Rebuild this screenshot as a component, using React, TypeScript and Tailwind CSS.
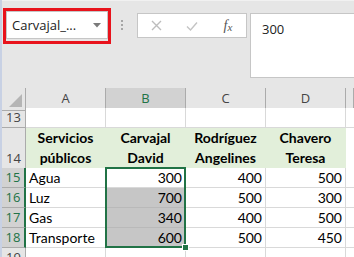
import React from "react";

const UI_FONT = "font-['Open_Sans',_'Noto_Sans',_sans-serif]";
const CELL_FONT = "font-['Lato',_'Liberation_Sans',_sans-serif]";

type Row = {
  num: number;
  cells: string[];
  kind: "blank" | "head" | "data";
  height: string;
};

const ROWS: Row[] = [
  { num: 13, cells: ["", "", "", ""], kind: "blank", height: "h-[20px]" },
  {
    num: 14,
    cells: ["Servicios\npúblicos", "Carvajal\nDavid", "Rodríguez\nAngelines", "Chavero\nTeresa"],
    kind: "head",
    height: "h-[40px]",
  },
  { num: 15, cells: ["Agua", "300", "400", "500"], kind: "data", height: "h-[20px]" },
  { num: 16, cells: ["Luz", "700", "500", "300"], kind: "data", height: "h-[20px]" },
  { num: 17, cells: ["Gas", "340", "400", "500"], kind: "data", height: "h-[20px]" },
  { num: 18, cells: ["Transporte", "600", "500", "450"], kind: "data", height: "h-[20px]" },
  { num: 19, cells: ["", "", "", ""], kind: "blank", height: "h-[20px]" },
];

function NameBox() {
  return (
    <div className="ml-[1px] mt-[7px] h-[36px] w-[108px] border-[3px] border-[#e8131c] pb-[2px]">
      <div className="flex h-full items-center border border-[#c6c6c6] bg-white pl-[5px] pr-[6px]">
        <span className={`${UI_FONT} flex-1 text-[13px] leading-none text-[#222]`}>Carvajal_...</span>
        <svg width="8" height="5" viewBox="0 0 8 5">
          <path d="M0 0 L8 0 L4 4.5 Z" fill="#7a7a7a" />
        </svg>
      </div>
    </div>
  );
}

function FormulaButtons() {
  return (
    <div className="ml-[14px] mt-[12px] flex h-[25px] w-[110px] items-center border border-[#c6c6c6] bg-white">
      <div className="flex w-[36px] justify-center">
        <svg width="11" height="11" viewBox="0 0 11 11">
          <path d="M1 1 L10 10 M10 1 L1 10" stroke="#bdbdbd" strokeWidth="1.4" />
        </svg>
      </div>
      <div className="flex w-[36px] justify-center">
        <svg width="12" height="10" viewBox="0 0 12 10">
          <path d="M1 5.5 L4.5 9 L11 1.5" stroke="#c4c4c4" strokeWidth="1.4" fill="none" />
        </svg>
      </div>
      <div className="flex w-[36px] justify-center">
        <span className="font-['Liberation_Serif',_serif] text-[14px] italic leading-none text-[#555]">
          f<span className="relative top-[1px] text-[11px]">x</span>
        </span>
      </div>
    </div>
  );
}

function Toolbar() {
  return (
    <div className="flex h-[88px] shrink-0 items-start border-t border-[#f1f1f1]">
      <NameBox />
      <div className="ml-[10px] mt-[19px] flex flex-col gap-[2px]">
        <div className="h-[2px] w-[2px] bg-[#a6a6a6]" />
        <div className="h-[2px] w-[2px] bg-[#a6a6a6]" />
        <div className="h-[2px] w-[2px] bg-[#a6a6a6]" />
      </div>
      <FormulaButtons />
      <div
        className={`${UI_FONT} ml-[3px] mt-[12px] h-[65px] flex-1 border border-r-0 border-[#c6c6c6] bg-white pl-[11px] pt-[7px] text-[13px] leading-[16px] text-[#222]`}
      >
        300
      </div>
    </div>
  );
}

function ColumnHeaders() {
  const cols = ["A", "B", "C", "D", ""];
  return (
    <div className="grid h-[20px] shrink-0 grid-cols-[24px_80px_80px_80px_80px_1fr]">
      <div className="relative border-r border-b border-[#ababab] bg-[#e6e6e6]">
        <svg className="absolute right-[3px] bottom-[3px]" width="13" height="13" viewBox="0 0 13 13">
          <path d="M13 0 L13 13 L0 13 Z" fill="#b5b5b5" />
        </svg>
      </div>
      {cols.map((c, i) =>
        c === "B" ? (
          <div
            key={i}
            className={`${UI_FONT} flex items-center justify-center border-r border-b-2 border-r-[#ababab] border-b-[#217346] bg-[#d2d2d2] pt-[1px] text-[13px] text-[#217346]`}
          >
            {c}
          </div>
        ) : (
          <div
            key={i}
            className={`${UI_FONT} flex items-center justify-center border-r border-b border-[#ababab] bg-[#e6e6e6] text-[13px] text-[#444]`}
          >
            {c}
          </div>
        )
      )}
    </div>
  );
}

function SheetRow({ row }: { row: Row }) {
  const selected = row.num >= 15 && row.num <= 18;
  return (
    <div className={`grid ${row.height} shrink-0 grid-cols-[24px_80px_80px_80px_80px_1fr]`}>
      <div
        className={`${UI_FONT} flex items-end justify-center border-b border-[#ababab] pb-[1px] text-[13px] leading-[18px] ${
          selected
            ? "border-r-2 border-r-[#217346] bg-[#d2d2d2] text-[#217346]"
            : "border-r border-r-[#ababab] bg-[#e6e6e6] text-[#444]"
        }`}
      >
        {row.num}
      </div>
      {row.cells.map((v, i) => {
        if (row.kind === "head") {
          return (
            <div
              key={i}
              className={`${CELL_FONT} flex flex-col items-center justify-end border-r border-b border-[#e2efda] bg-[#e2efda] text-[14px] font-bold leading-[20px] text-black`}
            >
              {v.split("\n").map((l) => (
                <span key={l}>{l}</span>
              ))}
            </div>
          );
        }
        const grayCell = i === 1 && row.num >= 16 && row.num <= 18;
        return (
          <div
            key={i}
            className={`${CELL_FONT} flex items-end border-r border-b text-[14px] leading-[19px] text-black ${
              grayCell ? "border-[#b9b9b9] bg-[#c6c6c6]" : "border-[#d9d9d9] bg-white"
            } ${i === 0 ? "justify-start pl-[3px]" : "justify-end pr-[3px]"}`}
          >
            {v}
          </div>
        );
      })}
      <div className="border-b border-[#d9d9d9] bg-white" />
    </div>
  );
}

export default function App() {
  return (
    <div className="flex h-[257px] w-[354px] overflow-hidden bg-[#e6e6e6]">
      <div className="w-[2px] shrink-0 bg-[#c8d1e4]" />
      <div className="relative flex w-[352px] flex-col">
        <Toolbar />
        <ColumnHeaders />
        {ROWS.map((r) => (
          <SheetRow key={r.num} row={r} />
        ))}
        {/* selection outline B15:B18 */}
        <div className="pointer-events-none absolute left-[103px] top-[167px] h-[81px] w-[81px] border-2 border-[#217346]">
          <div className="absolute right-[-5px] bottom-[-5px] h-[7px] w-[7px] border border-white bg-[#217346]" />
        </div>
      </div>
    </div>
  );
}
